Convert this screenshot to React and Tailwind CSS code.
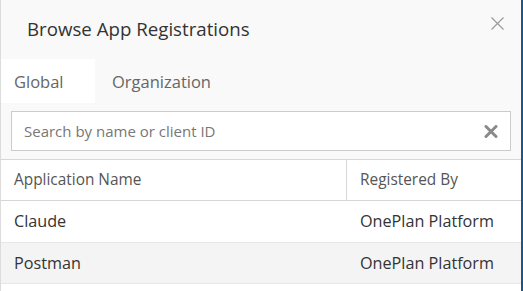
import React from "react";

export default function App() {
  const font = { fontFamily: '"Open Sans", "Noto Sans", sans-serif' };
  return (
    <div
      className="w-[523px] h-[291px] overflow-hidden bg-[#f9f9f9] border-l border-[#dcdcdc] border-r-2 border-r-[#1b5784] flex flex-col"
      style={font}
    >
      <div className="h-[59px] flex items-start justify-between pl-[26px] pr-[17px]">
        <div className="pt-[15px] text-[18.7px] leading-[28px] text-[#333]">Browse App Registrations</div>
        <svg className="mt-[17px]" width="13" height="13" viewBox="0 0 13 13">
          <path d="M0.5 0.5 L12.5 12.5 M12.5 0.5 L0.5 12.5" stroke="#9a9a9a" strokeWidth="1.2" />
        </svg>
      </div>
      <div className="h-[44px] flex">
        <div className="w-[94px] bg-white pl-[13px] pt-[2px] flex items-center text-[16.5px] text-[#666]">Global</div>
        <div className="pl-[17px] pt-[2px] flex items-center text-[16.5px] text-[#666]">Organization</div>
      </div>
      <div className="px-[10px] pt-[8px] pb-[8px] border-b border-[#d6d6d6]">
        <div className="h-[40px] bg-white border border-[#cccccc] flex items-center justify-between pl-[12px] pr-[12px]">
          <span className="text-[15px] text-[#777]">Search by name or client ID</span>
          <svg width="14" height="13" viewBox="0 0 14 13">
            <path d="M2 1.5 L12 11.5 M12 1.5 L2 11.5" stroke="#8a8a8a" strokeWidth="3" strokeLinecap="round" />
          </svg>
        </div>
      </div>
      <div className="bg-white flex-1 flex flex-col">
        <div className="h-[41px] flex border-b border-[#d6d6d6]">
          <div className="w-[346px] border-r border-[#d6d6d6] pl-[13px] flex items-center text-[15.4px] text-[#555]">Application Name</div>
          <div className="pl-[13px] flex items-center text-[15.4px] text-[#555]">Registered By</div>
        </div>
        <div className="h-[42px] flex border-b border-[#e6e6e6] text-[16.2px] text-[#333]">
          <div className="w-[347px] pl-[13px] flex items-center">Claude</div>
          <div className="pl-[12px] flex items-center">OnePlan Platform</div>
        </div>
        <div className="h-[41px] flex border-b border-[#e6e6e6] bg-[#f4f4f4] text-[16.2px] text-[#333]">
          <div className="w-[347px] pl-[13px] flex items-center">Postman</div>
          <div className="pl-[12px] flex items-center">OnePlan Platform</div>
        </div>
      </div>
    </div>
  );
}
